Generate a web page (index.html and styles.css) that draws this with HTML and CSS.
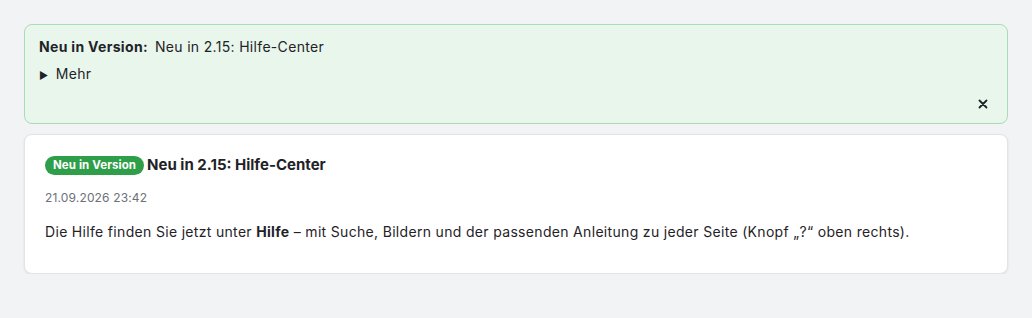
FILE: index.html
```html
<!DOCTYPE html>
<html lang="de">
<head>
<meta charset="utf-8">
<link rel="stylesheet" href="styles.css">
</head>
<body>
<main class="page">
  <div class="alert">
    <div class="alert-line">
      <strong class="alert-label">Neu in Version:</strong>
      <span class="alert-text">Neu in 2.15: Hilfe-Center</span>
    </div>
    <div class="more"><span class="tri">▶</span> Mehr</div>
    <div class="alert-foot">
      <svg class="close" width="10" height="10" viewBox="0 0 10 10" aria-label="Schließen"><path d="M1.5 1.5 L8.5 8.5 M8.5 1.5 L1.5 8.5" stroke="#1f2328" stroke-width="1.8" stroke-linecap="round"/></svg>
    </div>
  </div>
  <article class="card">
    <div class="card-head">
      <span class="badge">Neu in Version</span>
      <h2 class="title">Neu in 2.15: Hilfe-Center</h2>
    </div>
    <div class="date">21.09.2026 23:42</div>
    <p class="body">Die Hilfe finden Sie jetzt unter <strong>Hilfe</strong> – mit Suche, Bildern und der passenden Anleitung zu jeder Seite (Knopf „?“ oben rechts).</p>
  </article>
</main>
</body>
</html>
```
FILE: styles.css
```css
html, body { margin: 0; padding: 0; }
body {
  background: #f2f3f5;
  font-family: Inter, "Noto Sans", sans-serif;
  color: #1f2328;
  font-size: 14px;
  letter-spacing: 0.32px;
}
.page {
  padding: 24px 24px 0 24px;
  display: flex;
  flex-direction: column;
  gap: 10px;
}
.alert {
  background: #e8f6ec;
  border: 1px solid #a8dcb8;
  border-radius: 8px;
  padding: 13px 14px 12px 14px;
  height: 100px;
  box-sizing: border-box;
  display: flex;
  flex-direction: column;
}
.alert-line { display: flex; gap: 7px; line-height: 18px; }
.alert-label { font-weight: 700; }
.more { margin-top: 9px; line-height: 18px; }
.tri { font-size: 10px; margin-right: 3px; }
.alert-foot { margin-top: auto; display: flex; justify-content: flex-end; padding-right: 5px; padding-bottom: 2px; }
.close { display: block; }
.card {
  background: #fff;
  border: 1px solid #e2e4e8;
  border-radius: 8px;
  box-shadow: 0 1px 3px rgba(0,0,0,0.08);
  padding: 20px 20px 31px 20px;
}
.card-head { display: flex; align-items: center; gap: 3px; }
.badge {
  background: #2f9e48;
  color: #fff;
  font-weight: 700;
  font-size: 11.5px;
  letter-spacing: 0.1px;
  line-height: 19px;
  padding: 0 8px;
  border-radius: 10px;
}
.title { margin: 0; font-size: 15px; font-weight: 700; line-height: 20px; letter-spacing: 0; }
.date { margin-top: 15px; font-size: 12px; color: #6b7079; line-height: 16px; letter-spacing: 0.15px; }
.body { margin: 16px 0 0 0; line-height: 20px; }
```
